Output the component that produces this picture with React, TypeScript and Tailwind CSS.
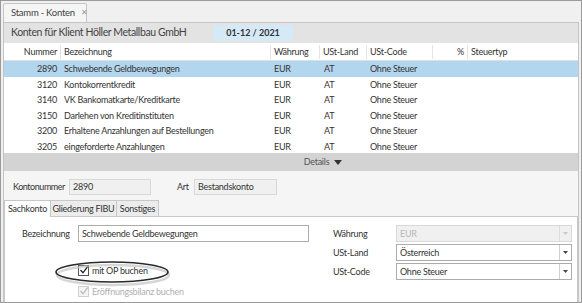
import React from "react";

const rows = [
  { n: "2890", b: "Schwebende Geldbewegungen", sel: true },
  { n: "3120", b: "Kontokorrentkredit" },
  { n: "3140", b: "VK Bankomatkarte/Kreditkarte" },
  { n: "3150", b: "Darlehen von Kreditinstituten" },
  { n: "3200", b: "Erhaltene Anzahlungen auf Bestellungen" },
  { n: "3205", b: "eingeforderte Anzahlungen" },
];

function Select({ value, disabled }: { value: string; disabled?: boolean }) {
  return (
    <div
      className={`flex h-[17px] w-[176px] border ${
        disabled ? "border-[#d8d8d8] bg-[#f0f0f0] text-[#b8b8b8]" : "border-[#acacac] bg-white text-[#333]"
      }`}
    >
      <div className="flex-1 pl-[3px] leading-[15px]">{value}</div>
      <div className={`w-[12px] border-l ${disabled ? "border-[#dcdcdc]" : "border-[#d0d0d0]"} flex items-center justify-center`}>
        <svg width="5" height="3" viewBox="0 0 5 3">
          <path d="M0 0 L5 0 L2.5 3 Z" fill={disabled ? "#c8c8c8" : "#444"} />
        </svg>
      </div>
    </div>
  );
}

function Check({ disabled }: { disabled?: boolean }) {
  return (
    <div
      className={`relative h-[11px] w-[11px] border ${disabled ? "border-[#d0d0d0] bg-[#f4f4f4]" : "border-[#555] bg-white"}`}
    >
      <svg className="absolute left-[0px] top-[-1px]" width="10" height="10" viewBox="0 0 10 10">
        <path d="M1.5 5 L4 7.8 L8.7 1.5" fill="none" stroke={disabled ? "#bdbdbd" : "#222"} strokeWidth="1.3" />
      </svg>
    </div>
  );
}

export default function App() {
  return (
    <div
      className="relative h-[303px] w-[582px] overflow-hidden whitespace-nowrap border border-[#9a9a9a] bg-[#f0f0f0] text-[9px] tracking-[-0.25px] text-[#333]"
      style={{ fontFamily: "Lato, 'Noto Sans', sans-serif" }}
    >
      {/* tab strip */}
      <div className="flex h-[21px] items-end pl-[2px]">
        <div className="flex h-[19px] w-[84px] items-center gap-[6px] rounded-t-[2px] border border-b-0 border-[#c4c4c4] bg-[#f5f5f5] pl-[7px] text-[9.5px] text-[#444]">
          <span>Stamm - Konten</span>
          <span className="text-[7.5px] text-[#999]">✕</span>
        </div>
      </div>

      <div className="mx-[2px] flex h-[281px] flex-col border border-[#c4c4c4] bg-[#f5f5f5]">
        {/* header bar */}
        <div className="flex h-[20px] items-center bg-[#e3e3e3] pl-[7px]">
          <span className="w-[202px] text-[10.5px] tracking-[-0.4px] text-[#444]">Konten für Klient Höller Metallbau GmbH</span>
          <div className="flex h-[16px] w-[80px] items-center justify-center rounded-[2px] bg-[#d6e9f7] text-[9px] font-bold tracking-[0px] text-[#333]">
            01-12 / 2021
          </div>
        </div>

        {/* table */}
        <div className="h-[110px] overflow-hidden bg-white">
          <div className="flex h-[18px] items-center border-b border-[#e0e0e0] bg-white pt-[1px] text-[#333]">
            <div className="w-[57px] border-r border-[#e4e4e4] pr-[3px] text-right">Nummer</div>
            <div className="w-[210px] border-r border-[#e4e4e4] pl-[3px]">Bezeichnung</div>
            <div className="w-[49px] border-r border-[#e4e4e4] pl-[3px]">Währung</div>
            <div className="w-[47px] border-r border-[#e4e4e4] pl-[3px]">USt-Land</div>
            <div className="w-[66px] border-r border-[#e4e4e4] pl-[3px]">USt-Code</div>
            <div className="w-[35px] border-r border-[#e4e4e4] pr-[3px] text-right">%</div>
            <div className="flex-1 pl-[3px]">Steuertyp</div>
          </div>
          {rows.map((r) => (
            <div
              key={r.n}
              className={`flex h-[15.5px] items-center ${r.sel ? "bg-[#b3d6ef]" : ""}`}
            >
              <div className="w-[57px] pr-[4px] text-right">{r.n}</div>
              <div className="w-[210px] pl-[3px]">{r.b}</div>
              <div className="w-[49px] pl-[3px]">EUR</div>
              <div className="w-[47px] pl-[4px]">AT</div>
              <div className="w-[66px] pl-[3px]">Ohne Steuer</div>
              <div className="w-[35px]"></div>
              <div className="flex-1"></div>
            </div>
          ))}
        </div>

        {/* details bar */}
        <div className="flex h-[18px] items-center justify-center gap-[5px] bg-[#d3d3d3] pl-[64px] text-[#555]">
          <span>Details</span>
          <svg width="8" height="5" viewBox="0 0 8 5">
            <path d="M0 0 L8 0 L4 5 Z" fill="#333" />
          </svg>
        </div>

        {/* form */}
        <div className="flex flex-1 flex-col bg-[#f5f5f5]">
          <div className="flex items-center pl-[9px] pt-[8px]">
            <span className="w-[56px] tracking-[-0.45px]">Kontonummer</span>
            <div className="h-[16px] w-[82px] border border-[#d8d8d8] bg-[#f0f0f0] pl-[3px] leading-[14px]">2890</div>
            <span className="ml-[26px] w-[17px]">Art</span>
            <div className="h-[16px] w-[83px] border border-[#d8d8d8] bg-[#f0f0f0] pl-[3px] leading-[14px]">Bestandskonto</div>
          </div>

          {/* tabs */}
          <div className="mt-[6px] flex h-[16px] items-end border-b border-[#c8c8c8]">
            <div className="-mb-px flex h-[17px] w-[47px] items-center justify-center border border-b-0 border-[#c8c8c8] bg-white">Sachkonto</div>
            <div className="flex h-[16px] w-[66px] items-center justify-center border-r border-t border-[#c8c8c8] bg-[#ececec]">Gliederung FIBU</div>
            <div className="flex h-[16px] w-[42px] items-center justify-center border-r border-t border-[#c8c8c8] bg-[#ececec]">Sonstiges</div>
          </div>

          {/* panel */}
          <div className="flex flex-1 border-x border-[#c8c8c8] bg-white">
            <div className="w-[320px] pl-[17px] pt-[8px]">
              <div className="flex items-center">
                <span className="w-[56px]">Bezeichnung</span>
                <div className="h-[17px] w-[231px] border border-[#acacac] bg-white pl-[3px] leading-[15px]">Schwebende Geldbewegungen</div>
              </div>
              <div className="ml-[56px] mt-[22px] flex items-center gap-[3px]">
                <Check />
                <span>mit OP buchen</span>
              </div>
              <div className="ml-[56px] mt-[7px] flex items-center gap-[3px] text-[#b0b0b0]">
                <Check disabled />
                <span>Eröffnungsbilanz buchen</span>
              </div>
            </div>
            <div className="flex flex-col gap-[2px] pl-[8px] pt-[8px]">
              {[
                ["Währung", "EUR", true],
                ["USt-Land", "Österreich", false],
                ["USt-Code", "Ohne Steuer", false],
              ].map(([l, v, d]) => (
                <div key={l as string} className="flex items-center">
                  <span className="w-[63px]">{l as string}</span>
                  <Select value={v as string} disabled={d as boolean} />
                </div>
              ))}
            </div>
          </div>
        </div>
      </div>

      {/* annotation ellipse */}
      <svg className="pointer-events-none absolute left-[49px] top-[258px]" width="124" height="28" viewBox="0 0 124 28">
        <ellipse cx="62" cy="14.5" rx="56" ry="10" fill="none" stroke="#bbb" strokeWidth="2.5" opacity="0.6" transform="translate(1 1.5)" />
        <ellipse cx="62" cy="13" rx="56" ry="10" fill="none" stroke="#2a2a2a" strokeWidth="1.6" />
      </svg>
    </div>
  );
}
